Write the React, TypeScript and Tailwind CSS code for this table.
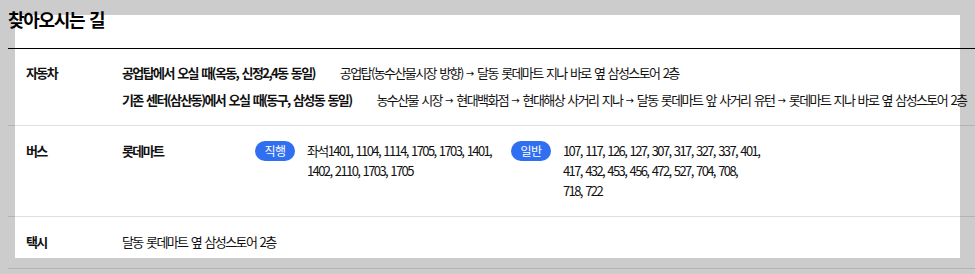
const font = {
  fontFamily: '"Noto Sans CJK KR", "Noto Sans", sans-serif',
};

const directBus = "좌석1401, 1104, 1114, 1705, 1703, 1401, 1402, 2110, 1703, 1705";
const normalBus = [
  "107, 117, 126, 127, 307, 317, 327, 337, 401,",
  "417, 432, 453, 456, 472, 527, 704, 708,",
  "718, 722",
];

const routes = [
  {
    from: "공업탑에서 오실 때(옥동, 신정2,4동 동일)",
    path: ["공업탑(농수산물시장 방향)", "달동 롯데마트 지나 바로 옆 삼성스토어 2층"],
  },
  {
    from: "기존 센터(삼산동)에서 오실 때(동구, 삼성동 동일)",
    path: [
      "농수산물 시장",
      "현대백화점",
      "현대해상 사거리 지나",
      "달동 롯데마트 앞 사거리 유턴",
      "롯데마트 지나 바로 옆 삼성스토어 2층",
    ],
  },
];

function Badge({ label }: { label: string }) {
  return (
    <span className="flex h-[20px] w-[40px] shrink-0 items-center justify-center rounded-full bg-[#2f6ff0] text-[12px] leading-none tracking-[-0.5px] text-white">
      {label}
    </span>
  );
}

export default function App() {
  return (
    <div
      className="h-[274px] w-[975px] overflow-hidden bg-[#cccccc] pl-[15px] pt-[15px] text-[#111]"
      style={font}
    >
      <div className="flow-root h-[243px] w-[945px] bg-white">
        <div className="-ml-[7px] -mt-[15px] w-[967px]">
          {/* title */}
          <div className="flex h-[48px] items-start pt-[6px]">
            <h2 className="text-[18px] font-bold leading-[26px] tracking-[-1.3px] [word-spacing:2px] text-black">
              찾아오시는 길
            </h2>
          </div>

          <div className="border-t border-black text-[13px] leading-[20px] tracking-[-1.6px] [word-spacing:2px]">
            {/* car */}
            <div className="flex border-b border-[#0000001f] pb-[15px] pl-[18px] pt-[14px]">
              <div className="w-[96px] shrink-0 font-bold">자동차</div>
              <div className="flex flex-col gap-[7px]">
                {routes.map((r) => (
                  <div key={r.from} className="flex h-[20px] whitespace-nowrap">
                    <span className="font-bold">{r.from}</span>
                    <span className="ml-[25px]">
                      {r.path.map((p, i) => (
                        <span key={p}>
                          {i > 0 && (
                            <span className="mx-[3px] align-[1px] font-['DejaVu_Sans'] text-[10px] leading-[0] tracking-normal">
                              →
                            </span>
                          )}
                          {p}
                        </span>
                      ))}
                    </span>
                  </div>
                ))}
              </div>
            </div>

            {/* bus */}
            <div className="flex border-b border-[#0000001f] pb-[15px] pl-[18px] pt-[15px]">
              <div className="w-[96px] shrink-0 font-bold">버스</div>
              <div className="w-[133px] shrink-0 font-bold">롯데마트</div>
              <div className="flex items-start">
                <Badge label="직행" />
                <p className="ml-[12px] mr-[12px] w-[192px]">{directBus}</p>
              </div>
              <div className="flex items-start">
                <Badge label="일반" />
                <p className="ml-[12px] w-[210px]">
                  {normalBus.map((line) => (
                    <span key={line} className="block">
                      {line}
                    </span>
                  ))}
                </p>
              </div>
            </div>

            {/* taxi */}
            <div className="flex border-b border-[#0000001f] pb-[16px] pl-[18px] pt-[15px]">
              <div className="w-[96px] shrink-0 font-bold">택시</div>
              <div>달동 롯데마트 옆 삼성스토어 2층</div>
            </div>
          </div>
        </div>
      </div>
    </div>
  );
}
